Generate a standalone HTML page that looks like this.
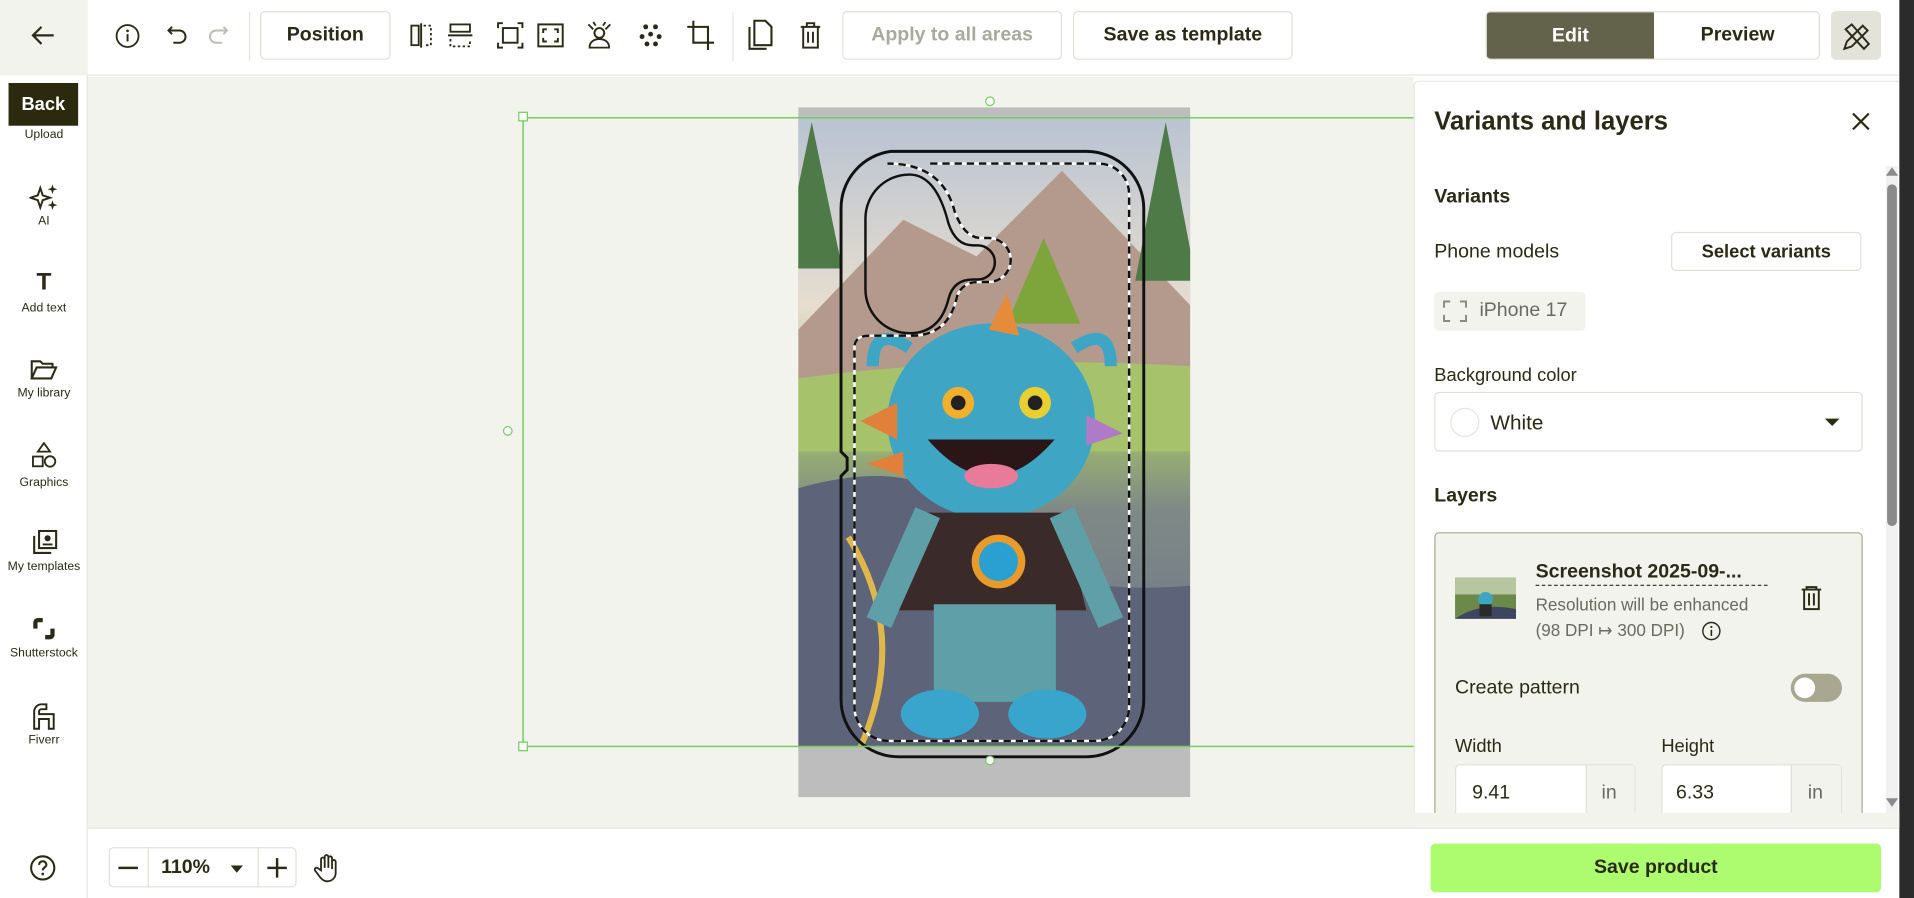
<!DOCTYPE html>
<html><head><meta charset="utf-8"><style>
*{box-sizing:border-box;margin:0;padding:0}
html,body{width:1914px;height:898px;overflow:hidden;background:#fff}
#w{position:absolute;left:0;top:0;width:1568px;height:736px;transform:scale(1.22066);transform-origin:0 0;font-family:"Liberation Sans",sans-serif;color:#2b2a17}
.a{position:absolute}
.btn{position:absolute;border:1px solid #e0e0d8;border-radius:4px;background:#fff;font-weight:bold;font-size:16px;display:flex;align-items:center;justify-content:center}
.ic{position:absolute}
.sb{position:absolute;left:0;width:72px;text-align:center;font-size:10px}
</style></head><body><div id="w">
<div class="a" style="left:0;top:0;width:1556px;height:62px;background:#fff;border-bottom:1px solid #e5e5dd"></div>
<div class="a" style="left:0;top:0;width:72px;height:62px;background:#f3f3ee"></div>
<svg class="ic" style="left:24px;top:19px" width="22" height="20" viewBox="0 0 22 20"><path d="M20 10H3M10 3L3 10l7 7" stroke="#2b2a17" stroke-width="1.8" fill="none"/></svg>
<svg class="ic" style="left:94px;top:19px" width="21" height="21"><circle cx="10.5" cy="10.5" r="9" stroke="#2b2a17" stroke-width="1.5" fill="none"/><path d="M10.5 9v6" stroke="#2b2a17" stroke-width="1.6"/><circle cx="10.5" cy="6.3" r="1.1" fill="#2b2a17"/></svg>
<svg class="ic" style="left:136px;top:19px" width="20" height="20"><path d="M5 3L2 6l3 3M2 6h9a5 5 0 010 10H6" stroke="#2b2a17" stroke-width="1.6" fill="none"/></svg>
<svg class="ic" style="left:168px;top:19px" width="20" height="20"><path d="M15 3l3 3-3 3M18 6H9a5 5 0 000 10h5" stroke="#bdbdb2" stroke-width="1.6" fill="none"/></svg>
<div class="a" style="left:204px;top:10px;width:1px;height:40px;background:#e5e5dd"></div>
<div class="btn" style="left:213px;top:9px;width:107px;height:40px">Position</div>
<svg class="ic" style="left:334px;top:18px" width="22" height="22"><path d="M11 1v20" stroke="#2b2a17" stroke-width="1.6"/><rect x="3" y="3" width="6" height="16" stroke="#2b2a17" fill="none" stroke-width="1.5"/><path d="M13 3h6v16h-6" stroke="#2b2a17" stroke-dasharray="2 2" fill="none" stroke-width="1.5"/></svg>
<svg class="ic" style="left:366px;top:18px" width="22" height="22"><path d="M1 11h20" stroke="#2b2a17" stroke-width="1.6"/><rect x="3" y="2" width="16" height="6" stroke="#2b2a17" fill="none" stroke-width="1.5"/><path d="M3 14v6h16v-6" stroke="#2b2a17" stroke-dasharray="2 2" fill="none" stroke-width="1.5"/></svg>
<svg class="ic" style="left:407px;top:18px" width="22" height="22"><rect x="5" y="5" width="12" height="12" stroke="#2b2a17" fill="none" stroke-width="1.6"/><path d="M1 5V1h4M17 1h4v4M21 17v4h-4M5 21H1v-4" stroke="#2b2a17" fill="none" stroke-width="1.6"/></svg>
<svg class="ic" style="left:440px;top:18px" width="22" height="22"><rect x="1" y="2" width="20" height="18" stroke="#2b2a17" fill="none" stroke-width="1.6"/><path d="M5 9V6h3M14 6h3v3M17 13v3h-3M8 16H5v-3" stroke="#2b2a17" fill="none" stroke-width="1.6"/></svg>
<svg class="ic" style="left:480px;top:17px" width="22" height="24"><circle cx="11" cy="10" r="4" stroke="#2b2a17" fill="none" stroke-width="1.6"/><path d="M3 22c0-5 4-7 8-7s8 2 8 7zM2 3l4 4M20 3l-4 4M6 1l2 3M16 1l-2 3" stroke="#2b2a17" fill="none" stroke-width="1.5"/></svg>
<svg class="ic" style="left:523px;top:19px" width="20" height="20" fill="#2b2a17"><circle cx="6" cy="3" r="2"/><circle cx="14" cy="3" r="2"/><circle cx="10" cy="9" r="2"/><circle cx="3" cy="11" r="2"/><circle cx="17" cy="11" r="2"/><circle cx="7" cy="17" r="2"/><circle cx="14" cy="17" r="2"/></svg>
<svg class="ic" style="left:562px;top:16px" width="24" height="26"><path d="M6 1v18h17M1 6h17v19" stroke="#2b2a17" fill="none" stroke-width="1.7"/></svg>
<div class="a" style="left:600px;top:10px;width:1px;height:40px;background:#e5e5dd"></div>
<svg class="ic" style="left:612px;top:16px" width="22" height="26"><path d="M6 1h9l5 5v15H6z" stroke="#2b2a17" fill="none" stroke-width="1.7"/><path d="M2 6v18h14" stroke="#2b2a17" fill="none" stroke-width="1.7"/></svg>
<svg class="ic" style="left:655px;top:18px" width="18" height="22"><path d="M1 4h16M6 4V1h6v3M3 4v17h12V4M7 8v9M11 8v9" stroke="#2b2a17" fill="none" stroke-width="1.6"/></svg>
<div class="btn" style="left:690px;top:9px;width:180px;height:40px;color:#a9a99f">Apply to all areas</div>
<div class="btn" style="left:879px;top:9px;width:180px;height:40px">Save as template</div>
<div class="a" style="left:1217px;top:9px;width:274px;height:40px;border:1px solid #e0e0d8;border-radius:4px;overflow:hidden;font-weight:bold;font-size:16px">
 <div class="a" style="left:0;top:0;width:137px;height:40px;background:#63624a;color:#fff;display:flex;align-items:center;justify-content:center">Edit</div>
 <div class="a" style="left:137px;top:0;width:137px;height:38px;display:flex;align-items:center;justify-content:center">Preview</div>
</div>
<div class="a" style="left:1500px;top:9px;width:41px;height:40px;background:#e3e3dc;border-radius:4px"></div>
<svg class="ic" style="left:1509px;top:18px" width="24" height="24"><path d="M3 6l5-4 14 16-4 4z" stroke="#2b2a17" fill="none" stroke-width="1.6"/><path d="M2 22l2-6 13-13 4 4-13 13z" stroke="#2b2a17" fill="none" stroke-width="1.6"/></svg>

<div class="a" style="left:0;top:62px;width:72px;height:674px;background:#fff;border-right:1px solid #e5e5dd"></div>
<div class="a" style="left:7px;top:68px;width:57px;height:35px;background:#2b2a0e;color:#fff;font-weight:bold;font-size:15px;display:flex;align-items:center;justify-content:center">Back</div>
<div class="sb" style="top:105px">Upload</div>
<svg class="ic" style="left:24px;top:151px" width="24" height="22" fill="#2b2a17"><path d="M9 3l2 6 6 2-6 2-2 6-2-6-6-2 6-2z" fill="none" stroke="#2b2a17" stroke-width="1.6"/><path d="M19 0l1 3 3 1-3 1-1 3-1-3-3-1 3-1zM19 13l1 3 3 1-3 1-1 3-1-3-3-1 3-1z"/></svg>
<div class="sb" style="top:176px">AI</div>
<div class="a" style="left:0;top:220px;width:72px;text-align:center;font-weight:bold;font-size:20px">T</div>
<div class="sb" style="top:247px">Add text</div>
<svg class="ic" style="left:25px;top:294px" width="22" height="18"><path d="M1 16V2h7l2 2h8v3M1 16l4-9h16l-4 9z" stroke="#2b2a17" fill="none" stroke-width="1.7"/></svg>
<div class="sb" style="top:317px">My library</div>
<svg class="ic" style="left:25px;top:362px" width="22" height="22"><path d="M11 1l5 7H6z" stroke="#2b2a17" fill="none" stroke-width="1.5"/><rect x="2" y="12" width="8" height="8" stroke="#2b2a17" fill="none" stroke-width="1.5"/><circle cx="16" cy="16" r="4.3" stroke="#2b2a17" fill="none" stroke-width="1.5"/></svg>
<div class="sb" style="top:390px">Graphics</div>
<svg class="ic" style="left:24px;top:433px" width="24" height="22"><rect x="8" y="2" width="14" height="14" stroke="#2b2a17" fill="none" stroke-width="1.7"/><path d="M4 6v14h14" stroke="#2b2a17" fill="none" stroke-width="1.7"/><circle cx="15" cy="8" r="2.5" fill="#2b2a17"/><path d="M11 13h8" stroke="#2b2a17" stroke-width="1.5"/></svg>
<div class="sb" style="top:459px">My templates</div>
<svg class="ic" style="left:27px;top:506px" width="18" height="18"><path d="M2 9V4a2 2 0 012-2h4M16 9v5a2 2 0 01-2 2h-4" stroke="#2b2a17" fill="none" stroke-width="3.5"/></svg>
<div class="sb" style="top:530px">Shutterstock</div>
<svg class="ic" style="left:25px;top:575px" width="22" height="24"><path d="M3 22V8a6 6 0 016-6h4v4H9a2 2 0 00-2 2v2h12v12h-4V14H7v8z" stroke="#2b2a17" fill="none" stroke-width="1.6"/></svg>
<div class="sb" style="top:601px">Fiverr</div>
<svg class="ic" style="left:24px;top:700px" width="22" height="22"><circle cx="11" cy="11" r="9.5" stroke="#2b2a17" fill="none" stroke-width="1.7"/><path d="M8 8.5a3 3 0 116 0c0 2-3 2.2-3 4.5" stroke="#2b2a17" fill="none" stroke-width="1.7"/><circle cx="11" cy="16" r="1.1" fill="#2b2a17"/></svg>

<div class="a" style="left:72px;top:63px;width:1086px;height:615px;background:#f3f3ee"></div>
<svg class="a" style="left:400px;top:70px" width="800" height="600" viewBox="400 70 800 600">
 <defs>
  <linearGradient id="sky" x1="0" y1="0" x2="0" y2="1"><stop offset="0" stop-color="#b9c3d2"/><stop offset=".3" stop-color="#e6ddcf"/><stop offset=".5" stop-color="#9fbb6c"/><stop offset=".62" stop-color="#7f8a86"/><stop offset="1" stop-color="#6a6e84"/></linearGradient>
  <clipPath id="cp"><rect x="654" y="96" width="321" height="516"/></clipPath>
 </defs>
 <rect x="654" y="88" width="321" height="565" fill="#bdbdbd"/>
 <g clip-path="url(#cp)">
  <rect x="654" y="96" width="321" height="516" fill="url(#sky)"/>
  <path d="M654 270L740 180 800 210 870 140 975 250V310H654z" fill="#b39a8c"/>
  <path d="M654 310Q800 290 975 300V370H654z" fill="#a6c26a"/>
  <path d="M654 400Q760 370 800 430T975 480V612H654z" fill="#5d6378"/>
  <path d="M705 612Q745 520 695 440" stroke="#e0b84a" stroke-width="5" fill="none"/>
  <path d="M665 100l25 120h-50zM955 100l25 130h-50z" fill="#4e7a47"/>
  <path d="M855 195l30 70h-60z" fill="#7ea43c"/>
  <ellipse cx="812" cy="345" rx="85" ry="80" fill="#3fa5c4"/>
  <path d="M745 285q-30-20-30 15M880 285q30-20 30 15" stroke="#3fa5c4" stroke-width="10" fill="none"/>
  <path d="M810 270l15-30 10 35z" fill="#e58b3a"/>
  <path d="M735 330l-30 15 30 15zM740 370l-30 10 30 10z" fill="#e0803a"/>
  <path d="M890 340l30 15-30 10z" fill="#b07bc6"/>
  <circle cx="785" cy="330" r="13" fill="#f0b02c"/><circle cx="785" cy="330" r="6" fill="#222"/>
  <circle cx="848" cy="330" r="13" fill="#e8d030"/><circle cx="848" cy="330" r="6" fill="#222"/>
  <path d="M760 360q52 60 104 0z" fill="#2a1616"/>
  <ellipse cx="812" cy="390" rx="22" ry="10" fill="#e87a9a"/>
  <path d="M755 420h115l20 80h-155z" fill="#3a2a2a"/>
  <circle cx="818" cy="460" r="22" fill="#e89a2a"/><circle cx="818" cy="460" r="16" fill="#2aa0d0"/>
  <path d="M760 420l-40 90M870 420l40 90" stroke="#5fa0a8" stroke-width="22" fill="none"/>
  <path d="M765 495h100v80h-100z" fill="#5fa0a8"/>
  <ellipse cx="770" cy="585" rx="32" ry="20" fill="#3aa5cc"/><ellipse cx="858" cy="585" rx="32" ry="20" fill="#3aa5cc"/>
 </g>
 <path d="M730 124h160a47 47 0 0147 47v402a47 47 0 01-47 47H736a47 47 0 01-47-47v-183l5-5v-10l-5-5V171a47 47 0 0141-47z" stroke="#111" stroke-width="2.4" fill="none"/>
 <g fill="none" stroke-width="2">
 <path id="dp" d="M762 134h138a25 25 0 0125 25v420a28 28 0 01-28 28H728a28 28 0 01-28-28V285q0-10 12-10h35q30 0 37-32q4-12 18-12h8a18 18 0 000-36h-6q-14 0-22-22q-10-39-55-39" stroke="#fff"/>
 <path d="M762 134h138a25 25 0 0125 25v420a28 28 0 01-28 28H728a28 28 0 01-28-28V285q0-10 12-10h35q30 0 37-32q4-12 18-12h8a18 18 0 000-36h-6q-14 0-22-22q-10-39-55-39" stroke="#111" stroke-dasharray="6 4"/>
 <path d="M745 143a36 36 0 00-36 36v58a36 36 0 0036 36q25 0 32-28q4-16 20-16h4a14 14 0 000-28h-4q-14 0-20-18q-10-40-32-40z" stroke="#111"/>
 </g>
 <rect x="428.5" y="96.5" width="800" height="515" stroke="#6fcf5a" stroke-width="1.2" fill="none"/>
 <rect x="425" y="92" width="7" height="7" fill="#fff" stroke="#6fcf5a"/>
 <rect x="425" y="608" width="7" height="7" fill="#fff" stroke="#6fcf5a"/>
 <circle cx="811" cy="83" r="3.5" fill="#fff" stroke="#6fcf5a"/>
 <circle cx="416" cy="353" r="3.5" fill="#fff" stroke="#6fcf5a"/>
 <circle cx="811" cy="623" r="3.5" fill="#fff" stroke="#6fcf5a"/>
</svg>

<div class="a" style="left:72px;top:678px;width:1484px;height:58px;background:#fff;border-top:1px solid #e5e5dd"></div>
<div class="a" style="left:89px;top:694px;width:154px;height:33px;border:1px solid #e0e0d8;border-radius:4px"></div>
<div class="a" style="left:121px;top:694px;width:1px;height:33px;background:#e0e0d8"></div>
<div class="a" style="left:211px;top:694px;width:1px;height:33px;background:#e0e0d8"></div>
<div class="a" style="left:97px;top:710px;width:16px;height:2px;background:#2b2a17"></div>
<div class="a" style="left:132px;top:702px;font-weight:bold;font-size:16px">110%</div>
<div class="a" style="left:189px;top:709px;width:0;height:0;border-left:5px solid transparent;border-right:5px solid transparent;border-top:6px solid #2b2a17"></div>
<div class="a" style="left:219px;top:710px;width:16px;height:2px;background:#2b2a17"></div>
<div class="a" style="left:226px;top:703px;width:2px;height:16px;background:#2b2a17"></div>
<svg class="ic" style="left:257px;top:699px" width="22" height="24"><path d="M6 14V5a1.5 1.5 0 013 0v7V3a1.5 1.5 0 013 0v9V4a1.5 1.5 0 013 0v9V7a1.5 1.5 0 013 0v9c0 4-3 7-7 7-3 0-5-2-7-5l-3-4a1.5 1.5 0 012-2z" stroke="#2b2a17" fill="none" stroke-width="1.5"/></svg>
<div class="a" style="left:1172px;top:691px;width:369px;height:40px;background:#adfc6f;border-radius:4px;font-weight:bold;font-size:16px;display:flex;align-items:center;justify-content:center">Save product</div>

<div class="a" style="left:1158px;top:66px;width:398px;height:600px;background:#fff;border-left:1px solid #e5e5dd;border-top:1px solid #e5e5dd;border-radius:4px 0 0 0"></div>
<div class="a" style="left:1175px;top:88px;font-weight:bold;font-size:21px">Variants and layers</div>
<svg class="ic" style="left:1517px;top:92px" width="15" height="15"><path d="M1 1l13 13M14 1L1 14" stroke="#2b2a17" stroke-width="1.8"/></svg>
<div class="a" style="left:1545px;top:136px;width:10px;height:530px;background:#f1f1f1"></div>
<div class="a" style="left:1546px;top:151px;width:8px;height:280px;background:#8a8a8a;border-radius:4px"></div>
<div class="a" style="left:1556px;top:0;width:12px;height:736px;background:#2b2b2b"></div>
<div class="a" style="left:1175px;top:153px;font-weight:bold;font-size:16px">Variants</div>
<div class="a" style="left:1175px;top:198px;font-size:16px">Phone models</div>
<div class="btn" style="left:1369px;top:190px;width:156px;height:32px;font-size:15px">Select variants</div>
<div class="a" style="left:1175px;top:239px;width:124px;height:32px;background:#f3f3ee;border-radius:4px"></div>
<svg class="ic" style="left:1182px;top:246px" width="20" height="18"><path d="M1 6V1h5M14 1h5v5M19 12v5h-5M6 17H1v-5" stroke="#8a8a80" fill="none" stroke-width="1.6"/></svg>
<div class="a" style="left:1212px;top:246px;font-size:16px;color:#6a6a5e">iPhone 17</div>
<div class="a" style="left:1175px;top:299px;font-size:15px">Background color</div>
<div class="a" style="left:1175px;top:321px;width:351px;height:49px;border:1px solid #e0e0d8;border-radius:4px"></div>
<div class="a" style="left:1188px;top:334px;width:24px;height:24px;border:1px solid #e5e5dd;border-radius:50%"></div>
<div class="a" style="left:1221px;top:337px;font-size:17px">White</div>
<div class="a" style="left:1495px;top:343px;border-left:6px solid transparent;border-right:6px solid transparent;border-top:6px solid #2b2a17"></div>
<div class="a" style="left:1175px;top:398px;font-weight:bold;font-size:16px">Layers</div>
<div class="a" style="left:1175px;top:436px;width:351px;height:240px;background:#f3f3ee;border:1px solid #a8a890;border-radius:4px"></div>
<svg class="ic" style="left:1192px;top:473px" width="50" height="34"><rect width="50" height="34" fill="#6b8a4a"/><rect width="50" height="14" fill="#b8c6a0"/><path d="M0 34Q20 20 50 26V34z" fill="#3e4560"/><circle cx="25" cy="18" r="6" fill="#3fa5c4"/><rect x="20" y="22" width="10" height="10" fill="#2a2a2a"/></svg>
<div class="a" style="left:1258px;top:460px;font-weight:bold;font-size:16px;border-bottom:1px dashed #2b2a17;padding-bottom:1px;width:190px;white-space:nowrap">Screenshot 2025-09-...</div>
<div class="a" style="left:1258px;top:487px;font-size:14px;color:#6a6a5e">Resolution will be enhanced</div>
<div class="a" style="left:1258px;top:508px;font-size:14px;color:#6a6a5e">(98 DPI ↦ 300 DPI)</div>
<svg class="ic" style="left:1394px;top:509px" width="16" height="16"><circle cx="8" cy="8" r="7" stroke="#2b2a17" fill="none" stroke-width="1.2"/><path d="M8 7v5" stroke="#2b2a17" stroke-width="1.3"/><circle cx="8" cy="4.6" r=".9" fill="#2b2a17"/></svg>
<svg class="ic" style="left:1475px;top:480px" width="18" height="20"><path d="M1 3h16M5 3V1h8v2M3 3v16h12V3M7 6v10M11 6v10" stroke="#2b2a17" fill="none" stroke-width="1.6"/></svg>
<div class="a" style="left:1192px;top:555px;font-size:16px">Create pattern</div>
<div class="a" style="left:1467px;top:552px;width:42px;height:23px;background:#a8a890;border-radius:12px"></div>
<div class="a" style="left:1470px;top:555px;width:17px;height:17px;background:#fff;border-radius:50%"></div>
<div class="a" style="left:1192px;top:603px;font-size:15px">Width</div>
<div class="a" style="left:1361px;top:603px;font-size:15px">Height</div>
<div class="a" style="left:1192px;top:626px;width:148px;height:40px;border:1px solid #e0e0d8;border-bottom:none;background:#fff;border-radius:4px 4px 0 0"></div>
<div class="a" style="left:1299px;top:627px;width:40px;height:39px;background:#f3f3ee;border-left:1px solid #e0e0d8"></div>
<div class="a" style="left:1206px;top:641px;font-size:16px">9.41</div>
<div class="a" style="left:1312px;top:641px;font-size:16px;color:#6a6a5e">in</div>
<div class="a" style="left:1361px;top:626px;width:148px;height:40px;border:1px solid #e0e0d8;border-bottom:none;background:#fff;border-radius:4px 4px 0 0"></div>
<div class="a" style="left:1467px;top:627px;width:41px;height:39px;background:#f3f3ee;border-left:1px solid #e0e0d8"></div>
<div class="a" style="left:1373px;top:641px;font-size:16px">6.33</div>
<div class="a" style="left:1481px;top:641px;font-size:16px;color:#6a6a5e">in</div>
<div class="a" style="left:1158px;top:666px;width:398px;height:12px;background:#f3f3ee"></div>
<div class="a" style="left:1545px;top:137px;border-left:5px solid transparent;border-right:5px solid transparent;border-bottom:7px solid #8a8a8a"></div>
<div class="a" style="left:1545px;top:654px;border-left:5px solid transparent;border-right:5px solid transparent;border-top:7px solid #8a8a8a"></div>
</div></body></html>
